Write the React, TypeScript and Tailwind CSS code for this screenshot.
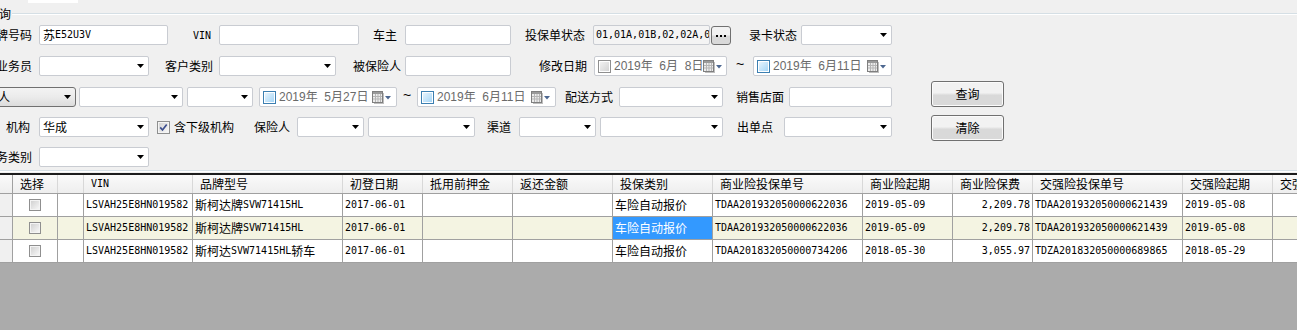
import React from "react";

const MONO = "font-['DejaVu_Sans_Mono',monospace] text-[10px]";

// SimSun-ish: ASCII runs narrow mono, CJK as is
function Txt({ s }: { s: string }) {
  const parts = s.split(/([\x20-\x7e]+)/).filter(Boolean);
  return (
    <>
      {parts.map((p, i) =>
        /^[\x20-\x7e]+$/.test(p) ? (
          <span key={i} className={MONO}>
            {p}
          </span>
        ) : (
          <span key={i}>{p}</span>
        )
      )}
    </>
  );
}

function Arrow() {
  return (
    <svg width="7" height="4" viewBox="0 0 7 4" className="shrink-0">
      <path d="M0 0h7L3.5 4z" fill="#000" />
    </svg>
  );
}

function Label({ className, children }: { className: string; children: React.ReactNode }) {
  return (
    <div className={`flex h-full shrink-0 items-center justify-end whitespace-nowrap ${className}`}>
      <span>{children}</span>
    </div>
  );
}

function Input({ className, value = "" }: { className: string; value?: string }) {
  return (
    <div
      className={`flex h-full shrink-0 items-center overflow-hidden whitespace-nowrap rounded-[2px] border border-[#c9ccd2] bg-white pl-[3px] ${className}`}
    >
      <Txt s={value} />
    </div>
  );
}

function Select({ className, value = "", button = false }: { className: string; value?: string; button?: boolean }) {
  return (
    <div
      className={`flex h-full shrink-0 items-center rounded-[2px] border pl-[3px] pr-[4px] ${
        button
          ? "rounded-[3px] border-[#707070] bg-gradient-to-b from-[#f3f3f3] via-[#ebebeb] to-[#dcdcdc]"
          : "border-[#c9ccd2] bg-white"
      } ${className}`}
    >
      <span className="flex-1 overflow-hidden whitespace-nowrap leading-[14px]">{value}</span>
      <Arrow />
    </div>
  );
}

function CalIcon() {
  return (
    <svg width="19" height="13" viewBox="0 0 19 13" className="shrink-0">
      <rect x="2" y="2" width="10" height="11" fill="#6e6e6e" opacity="0.45" />
      <rect x="0.5" y="0.5" width="10" height="11" fill="#ececec" stroke="#7f7f7f" />
      <rect x="1" y="1" width="9" height="2" fill="#9a9a9a" />
      <path d="M1 5.5h9M1 8h9M3.5 3v8M6 3v8M8.5 3v8" stroke="#b5b5b5" strokeWidth="1" />
      <path d="M13 5h6l-3 3.5z" fill="#4d6790" />
    </svg>
  );
}

function DateBox({ className, value, gray = false }: { className: string; value: string; gray?: boolean }) {
  return (
    <div
      className={`flex h-full shrink-0 items-center rounded-[2px] border border-[#c9ccd2] bg-white pl-[3px] pr-[5px] ${className}`}
    >
      <div
        className={`h-[13px] w-[13px] shrink-0 border p-[1px] ${
          gray ? "border-[#8f8f8f]" : "border-[#3c7fb1]"
        }`}
      >
        <div
          className={`h-full w-full bg-gradient-to-br ${
            gray ? "from-[#f2f2f2] to-[#d4d4d4]" : "from-[#e6f4fd] to-[#a6d6f6]"
          }`}
        />
      </div>
      <span className="ml-[3px] flex-1 whitespace-pre font-['Liberation_Sans','Noto_Sans_CJK_SC',sans-serif] text-[12px] leading-[14px] text-[#6a6a6a]">
        {value}
      </span>
      <CalIcon />
    </div>
  );
}

function Tilde({ className }: { className: string }) {
  return (
    <div
      className={`flex h-full shrink-0 items-center justify-center pb-[4px] font-['Liberation_Sans',sans-serif] text-[14px] ${className}`}
    >
      ~
    </div>
  );
}

function WinButton({ children }: { children: React.ReactNode }) {
  return (
    <div className="flex h-[26px] w-[73px] items-center justify-center rounded-[3px] border border-[#707070] bg-gradient-to-b from-[#f2f2f2] from-45% to-[#d9d9d9] to-55% shadow-[inset_0_0_0_1px_#fbfbfb]">
      {children}
    </div>
  );
}

function Check() {
  return (
    <svg width="13" height="13" viewBox="0 0 13 13" className="shrink-0">
      <defs>
        <linearGradient id="cg" x1="0" y1="0" x2="1" y2="1">
          <stop offset="0" stopColor="#d4d4d4" />
          <stop offset="1" stopColor="#f7f7f7" />
        </linearGradient>
      </defs>
      <rect x="0.5" y="0.5" width="12" height="12" fill="#f4f4f4" stroke="#8e8f8f" />
      <rect x="2" y="2" width="9" height="9" fill="url(#cg)" />
      <path d="M3.2 6.4l2.3 2.6 4.2-5.6" fill="none" stroke="#3d4f8e" strokeWidth="1.7" />
    </svg>
  );
}

function CellCheck() {
  return (
    <div className="h-[12px] w-[12px] border border-[#8f8f8f] bg-[#f4f4f4] p-[1px]">
      <div className="h-full w-full bg-gradient-to-br from-[#d2d2d2] to-[#f6f6f6]" />
    </div>
  );
}

const cols = [
  { w: "w-[13px]", h: "" },
  { w: "w-[45px]", h: "选择" },
  { w: "w-[26px]", h: "" },
  { w: "w-[109px]", h: "VIN" },
  { w: "w-[150px]", h: "品牌型号" },
  { w: "w-[80px]", h: "初登日期" },
  { w: "w-[90px]", h: "抵用前押金" },
  { w: "w-[100px]", h: "返还金额" },
  { w: "w-[100px]", h: "投保类别" },
  { w: "w-[150px]", h: "商业险投保单号" },
  { w: "w-[90px]", h: "商业险起期" },
  { w: "w-[80px]", h: "商业险保费" },
  { w: "w-[150px]", h: "交强险投保单号" },
  { w: "w-[90px]", h: "交强险起期" },
  { w: "w-[120px]", h: "交强险保费" },
];

const rows = [
  ["LSVAH25E8HN019582", "斯柯达牌SVW71415HL", "2017-06-01", "", "", "车险自动报价", "TDAA201932050000622036", "2019-05-09", "2,209.78", "TDAA201932050000621439", "2019-05-08", ""],
  ["LSVAH25E8HN019582", "斯柯达牌SVW71415HL", "2017-06-01", "", "", "车险自动报价", "TDAA201932050000622036", "2019-05-09", "2,209.78", "TDAA201932050000621439", "2019-05-08", ""],
  ["LSVAH25E8HN019582", "斯柯达SVW71415HL轿车", "2017-06-01", "", "", "车险自动报价", "TDAA201832050000734206", "2018-05-30", "3,055.97", "TDZA201832050000689865", "2018-05-29", ""],
];

export default function App() {
  return (
    <div className="flex h-[330px] w-[1297px] flex-col overflow-hidden bg-[#f0f0f0] font-['Noto_Sans_CJK_SC',sans-serif] text-[12px] leading-[14px] text-black">
      {/* tab strip */}
      <div className="flex h-[3px] shrink-0">
        <div className="ml-[28px] w-[50px] bg-white" />
      </div>

      {/* group box title */}
      <div className="mt-[5px] flex h-[12px] shrink-0 items-center">
        <div className="flex w-[11px] justify-end whitespace-nowrap">
          <span>查询</span>
        </div>
        <div className="ml-[1px] flex-1 border-t border-[#d5dfe5] border-b border-b-white" />
      </div>

      {/* form */}
      <div className="mt-[5px] flex shrink-0">
        <div className="flex w-[892px] flex-col">
          <div className="flex h-[20px]">
            <Label className="w-[39px] pr-[7px]">车牌号码</Label>
            <Input className="w-[129px]" value="苏E52U3V" />
            <Label className="w-[51px] pr-[8px]">
              <Txt s="VIN" />
            </Label>
            <Input className="w-[140px]" />
            <Label className="w-[46px] pr-[8px]">车主</Label>
            <Input className="w-[106px]" />
            <Label className="w-[82px] pr-[8px]">投保单状态</Label>
            <div className="flex h-full w-[117px] shrink-0 items-center overflow-hidden whitespace-nowrap rounded-[2px] border border-[#c9ccd2] bg-[#f4f4f4] pl-[2px]">
              <Txt s="01,01A,01B,02,02A,03,04" />
            </div>
            <div className="ml-[1px] mt-[1px] flex h-[19px] w-[20px] shrink-0 items-center justify-center gap-[2px] rounded-[3px] border border-[#707070] bg-gradient-to-b from-[#f2f2f2] from-45% to-[#d9d9d9] to-55%">
              <div className="h-[2px] w-[2px] bg-black" />
              <div className="h-[2px] w-[2px] bg-black" />
              <div className="h-[2px] w-[2px] bg-black" />
            </div>
            <Label className="w-[70px] pr-[4px]">录卡状态</Label>
            <Select className="w-[91px]" />
          </div>

          <div className="mt-[11px] flex h-[20px]">
            <Label className="w-[39px] pr-[7px]">业务员</Label>
            <Select className="w-[110px]" />
            <Label className="w-[70px] pr-[6px]">客户类别</Label>
            <Select className="w-[117px]" />
            <Label className="w-[69px] pr-[4px]">被保险人</Label>
            <Input className="w-[106px]" />
            <Label className="w-[83px] pr-[7px]">修改日期</Label>
            <DateBox className="w-[133px]" value="2019年  6月  8日" gray />
            <Tilde className="w-[26px]" />
            <DateBox className="w-[139px]" value="2019年  6月11日" />
          </div>

          <div className="mt-[11px] flex h-[20px]">
            <Select className="ml-[-30px] w-[106px]" value="投保人" button />
            <Select className="ml-[3px] w-[104px]" />
            <Select className="ml-[4px] w-[66px]" />
            <DateBox className="ml-[6px] w-[138px]" value="2019年  5月27日" />
            <Tilde className="w-[20px]" />
            <DateBox className="w-[139px]" value="2019年  6月11日" />
            <Label className="w-[63px] pr-[6px]">配送方式</Label>
            <Select className="w-[104px]" />
            <Label className="w-[66px] pr-[5px]">销售店面</Label>
            <Input className="w-[103px]" />
          </div>

          <div className="mt-[10px] flex h-[20px]">
            <Label className="w-[39px] pr-[9px]">机构</Label>
            <Select className="w-[110px]" value="华成" />
            <div className="ml-[8px] flex h-full shrink-0 items-center">
              <Check />
              <span className="ml-[4px] whitespace-nowrap">含下级机构</span>
            </div>
            <Label className="w-[63px] pr-[7px]">保险人</Label>
            <Select className="w-[67px]" />
            <Select className="ml-[4px] w-[107px]" />
            <Label className="w-[44px] pr-[8px]">渠道</Label>
            <Select className="w-[77px]" />
            <Select className="ml-[4px] w-[123px]" />
            <Label className="w-[61px] pr-[11px]">出单点</Label>
            <Select className="w-[108px]" />
          </div>

          <div className="mt-[10px] flex h-[20px]">
            <Label className="w-[39px] pr-[7px]">业务类别</Label>
            <Select className="w-[110px]" />
          </div>
        </div>

        <div className="ml-[39px] mt-[56px] flex flex-col gap-[8px]">
          <WinButton>查询</WinButton>
          <WinButton>清除</WinButton>
        </div>
      </div>

      {/* group box bottom */}
      <div className="mt-[3px] h-[2px] shrink-0 border-t border-[#d5dfe5] border-b border-b-white" />
      <div className="mt-[1px] h-[2px] shrink-0 bg-[#1c1c1c]" />

      {/* grid */}
      <div className="flex h-[19px] shrink-0 border-b border-[#a0a0a0] bg-gradient-to-b from-[#fafafa] to-[#eeeeee]">
        {cols.map((c, i) => (
          <div
            key={i}
            className={`flex h-full shrink-0 items-center whitespace-nowrap border-r pl-[7px] ${c.w} ${
              i === 0 ? "border-[#a0a0a0]" : "border-[#d8d8d8]"
            }`}
          >
            <Txt s={c.h} />
          </div>
        ))}
      </div>

      {rows.map((r, ri) => (
        <div
          key={ri}
          className={`flex h-[23px] shrink-0 border-b border-[#a0a0a0] ${ri === 1 ? "bg-[#f4f4e2]" : "bg-white"}`}
        >
          <div className="h-full w-[13px] shrink-0 border-r border-[#a0a0a0] bg-[#f0f0f0]" />
          <div className="flex h-full w-[45px] shrink-0 items-center justify-center border-r border-[#a0a0a0]">
            <CellCheck />
          </div>
          <div className="h-full w-[26px] shrink-0 border-r border-[#a0a0a0]" />
          {r.map((v, ci) => {
            const c = cols[ci + 3];
            const blue = ri === 1 && ci === 5;
            const right = ci === 8;
            return (
              <div
                key={ci}
                className={`flex h-full shrink-0 items-center overflow-hidden whitespace-nowrap border-r border-[#a0a0a0] ${c.w} ${
                  right ? "justify-end pr-[2px]" : "pl-[2px]"
                } ${blue ? "bg-[#3399ff] text-white" : ""}`}
              >
                <Txt s={v} />
              </div>
            );
          })}
        </div>
      ))}

      <div className="flex-1 bg-[#ababab]" />
    </div>
  );
}
